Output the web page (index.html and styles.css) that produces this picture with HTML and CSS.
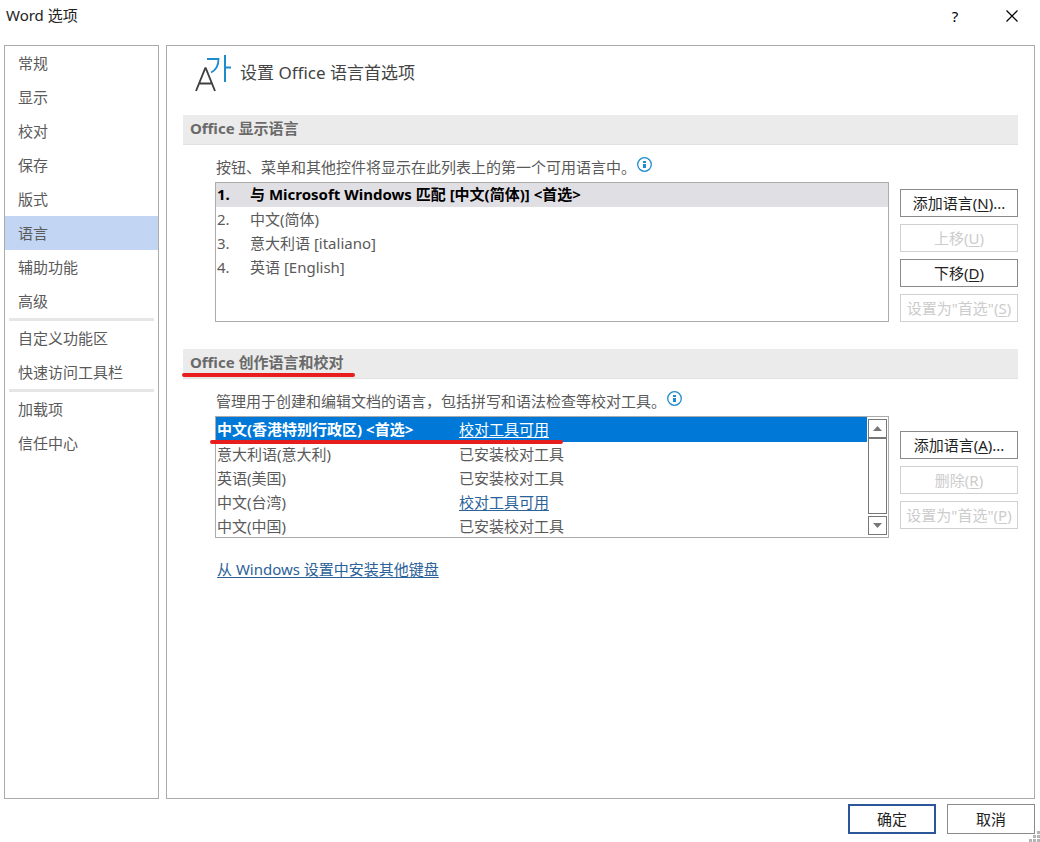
FILE: index.html
```
<!DOCTYPE html>
<html lang="zh-CN">

<head>
    <meta charset="UTF-8">
    <meta name="viewport" content="width=device-width, initial-scale=1.0">
    <title>Word 选项</title>
    <link rel="stylesheet" href="styles.css">
</head>

<body>
    <header class="titlebar">
        <h1 class="title">Word 选项</h1>
        <button type="button" class="win-btn help" aria-label="帮助">?</button>
        <button type="button" class="win-btn" aria-label="关闭">
            <svg width="12" height="12" viewBox="0 0 12 12"><path d="M0.5 0.5L11.5 11.5M11.5 0.5L0.5 11.5" stroke="#000" stroke-width="1.2" fill="none"/></svg>
        </button>
    </header>

    <div class="main">
        <nav class="sidebar">
            <a href="#">常规</a>
            <a href="#">显示</a>
            <a href="#">校对</a>
            <a href="#">保存</a>
            <a href="#">版式</a>
            <a href="#" class="active">语言</a>
            <a href="#">辅助功能</a>
            <a href="#">高级</a>
            <hr>
            <a href="#">自定义功能区</a>
            <a href="#">快速访问工具栏</a>
            <hr>
            <a href="#">加载项</a>
            <a href="#">信任中心</a>
        </nav>

        <main class="content">
            <div class="page-head">
                <svg width="36" height="38" viewBox="0 0 36 38" fill="none">
                    <path d="M1 37L10.5 13.5L20 37M4.5 29.5H16.5" stroke="#404040" stroke-width="1.9" stroke-linejoin="bevel"/>
                    <path d="M12 5H23.5C23.5 12 21 16 16 18.5" stroke="#1e8bcd" stroke-width="1.8"/>
                    <path d="M30 1V28M30 13.5H36" stroke="#1e8bcd" stroke-width="2"/>
                </svg>
                <h2>设置 Office 语言首选项</h2>
            </div>

            <section class="section">
                <h3 class="bar">Office 显示语言</h3>
                <div class="desc">
                    <p>按钮、菜单和其他控件将显示在此列表上的第一个可用语言中。</p>
                    <svg class="info" width="15" height="15" viewBox="0 0 15 15"><circle cx="7.5" cy="7.5" r="6.8" fill="none" stroke="#1e8bcd" stroke-width="1.3"/><path d="M6 4h3v2h-3zM6 7h3v4h-3z" fill="#1e8bcd"/></svg>
                </div>
                <div class="row">
                    <ol class="list">
                        <li class="first"><span>1.</span>与 Microsoft Windows 匹配 [中文(简体)] &lt;首选&gt;</li>
                        <li><span>2.</span>中文(简体)</li>
                        <li><span>3.</span>意大利语 [italiano]</li>
                        <li><span>4.</span>英语 [English]</li>
                    </ol>
                    <div class="buttons">
                        <button type="button" class="btn">添加语言(<u>N</u>)...</button>
                        <button type="button" class="btn" disabled>上移(<u>U</u>)</button>
                        <button type="button" class="btn">下移(<u>D</u>)</button>
                        <button type="button" class="btn" disabled>设置为"首选"(<u>S</u>)</button>
                    </div>
                </div>
            </section>

            <section class="section">
                <h3 class="bar marked">Office 创作语言和校对</h3>
                <div class="desc">
                    <p>管理用于创建和编辑文档的语言，包括拼写和语法检查等校对工具。</p>
                    <svg class="info" width="15" height="15" viewBox="0 0 15 15"><circle cx="7.5" cy="7.5" r="6.8" fill="none" stroke="#1e8bcd" stroke-width="1.3"/><path d="M6 4h3v2h-3zM6 7h3v4h-3z" fill="#1e8bcd"/></svg>
                </div>
                <div class="row">
                    <div class="table-box">
                        <table class="langs">
                            <tr class="selected">
                                <td>中文(香港特别行政区) &lt;首选&gt;</td>
                                <td><a href="#">校对工具可用</a></td>
                            </tr>
                            <tr>
                                <td>意大利语(意大利)</td>
                                <td>已安装校对工具</td>
                            </tr>
                            <tr>
                                <td>英语(美国)</td>
                                <td>已安装校对工具</td>
                            </tr>
                            <tr>
                                <td>中文(台湾)</td>
                                <td><a href="#">校对工具可用</a></td>
                            </tr>
                            <tr>
                                <td>中文(中国)</td>
                                <td>已安装校对工具</td>
                            </tr>
                        </table>
                        <div class="scroll">
                            <button type="button" aria-label="向上滚动"><svg width="9" height="5" viewBox="0 0 9 5"><path d="M0 5L4.5 0L9 5z" fill="#777"/></svg></button>
                            <div class="thumb"></div>
                            <button type="button" aria-label="向下滚动"><svg width="9" height="5" viewBox="0 0 9 5"><path d="M0 0L4.5 5L9 0z" fill="#777"/></svg></button>
                        </div>
                    </div>
                    <div class="buttons low">
                        <button type="button" class="btn">添加语言(<u>A</u>)...</button>
                        <button type="button" class="btn" disabled>删除(<u>R</u>)</button>
                        <button type="button" class="btn" disabled>设置为"首选"(<u>P</u>)</button>
                    </div>
                </div>
                <p class="more"><a href="#">从 Windows 设置中安装其他键盘</a></p>
            </section>
        </main>
    </div>

    <footer class="footer">
        <button type="button" class="btn ok">确定</button>
        <button type="button" class="btn">取消</button>
        <svg class="grip" width="11" height="11" viewBox="0 0 11 11"><path d="M8 0h3v3H8zM4 4h3v3H4zM8 4h3v3H8zM0 8h3v3H0zM4 8h3v3H4zM8 8h3v3H8z" fill="#b4b4b4"/></svg>
    </footer>
</body>

</html>
```

FILE: styles.css
```
* {
    box-sizing: border-box;
}

body {
    margin: 0;
    min-height: 100vh;
    display: flex;
    flex-direction: column;
    position: relative;
    background-color: white;
    color: #5a5a5a;
    font-family: "Noto Sans", "Noto Sans CJK SC", sans-serif;
    font-size: 15px;
    line-height: 24px;
}

h1,
h2,
h3,
p,
ol {
    margin: 0;
    padding: 0;
}

button {
    font: inherit;
    background-color: white;
    padding: 0;
}

a {
    color: #2a6299;
    text-underline-offset: 2px;
}

.titlebar {
    display: flex;
    align-items: center;
    height: 45px;
    padding: 0 6px 14px;
}

.title {
    flex: 1;
    color: #222222;
    font-size: 15px;
    font-weight: normal;
    line-height: 22px;
    padding-bottom: 2px;
}

.win-btn {
    display: flex;
    align-items: center;
    justify-content: center;
    width: 44px;
    height: 30px;
    border: none;
    color: black;
}

.help {
    width: 70px;
}

.main {
    flex: 1;
    display: flex;
    gap: 7px;
    padding: 0 5px 0 4px;
}

.sidebar {
    width: 155px;
    border: 1px solid #ababab;
}

.sidebar a {
    display: block;
    height: 34px;
    padding-left: 13px;
    line-height: 34px;
    color: #5a5a5a;
    text-decoration: none;
}

.sidebar .active {
    background-color: #c2d5f2;
}

.sidebar hr {
    height: 3px;
    margin: 0 4px;
    border: none;
    background-color: #e6e6e6;
}

.content {
    flex: 1;
    border: 1px solid #ababab;
    padding: 0 16px;
}

.page-head {
    display: flex;
    align-items: center;
    gap: 9px;
    height: 69px;
    padding: 0 0 15px 12px;
}

.page-head h2 {
    color: #444444;
    font-size: 17px;
    font-weight: normal;
}

.section {
    margin-bottom: 27px;
}

.bar {
    height: 30px;
    padding-left: 7px;
    border-bottom: 1px solid #e1e1e1;
    background-color: #ebebeb;
    color: #6a6a6a;
    font-size: 15px;
    line-height: 26px;
}

/* red pen marks */
.marked,
.selected {
    position: relative;
}

.marked::after,
.selected::after {
    content: "";
    position: absolute;
    height: 4px;
    border-radius: 2px;
    background-color: #e81e1e;
}

.marked::after {
    left: -1px;
    bottom: 1px;
    width: 173px;
}

.selected::after {
    left: -6px;
    bottom: -2px;
    width: 353px;
}

.desc {
    display: flex;
    gap: 1px;
    padding: 10px 0 3px 33px;
}

.info {
    margin-top: 2px;
}

.row {
    display: flex;
    gap: 11px;
    padding-left: 32px;
}

.list,
.table-box {
    flex: 1;
    border: 1px solid #ababab;
}

.list {
    list-style: none;
}

.list li {
    display: flex;
    height: 24px;
    padding-left: 1px;
}

.list span {
    width: 33px;
}

.list .first {
    background-color: #e0dfe4;
    color: black;
    font-weight: bold;
    line-height: 22px;
}

.table-box {
    display: flex;
    gap: 1px;
    height: 122px;
}

.langs {
    flex: 1;
    border-collapse: collapse;
}

.langs td {
    height: 24px;
    padding: 0 0 0 1px;
}

.langs td:first-child {
    width: 242px;
}

.langs .selected td {
    height: 25px;
    padding-bottom: 1px;
}

.selected {
    background-color: #0078d7;
    color: white;
}

.selected td:first-child {
    font-weight: bold;
}

.selected a {
    color: white;
}

.scroll {
    display: flex;
    flex-direction: column;
    width: 19px;
    margin: 2px 1px 2px 0;
}

.scroll button {
    display: flex;
    align-items: center;
    justify-content: center;
    height: 19px;
    border: 1px solid #777777;
}

.thumb {
    flex: 1;
    margin-bottom: 2px;
    border: 1px solid #777777;
}

.buttons {
    display: flex;
    flex-direction: column;
    gap: 7px;
    width: 118px;
    padding-top: 7px;
}

.low {
    padding-top: 15px;
}

.btn {
    height: 28px;
    border: 1px solid #8a8a8a;
    color: #222222;
    white-space: nowrap;
}

.btn u {
    text-underline-offset: 2px;
}

.btn:disabled {
    border-color: #d0d0d0;
    color: #cccccc;
}

.more {
    padding: 19px 0 0 34px;
}

.footer {
    display: flex;
    justify-content: flex-end;
    gap: 11px;
    padding: 5px 5px 8px;
}

.footer .btn {
    width: 88px;
    height: 30px;
}

.footer .ok {
    border: 2px solid #2b579a;
}

.grip {
    position: absolute;
    right: 0;
    bottom: 0;
}
```
